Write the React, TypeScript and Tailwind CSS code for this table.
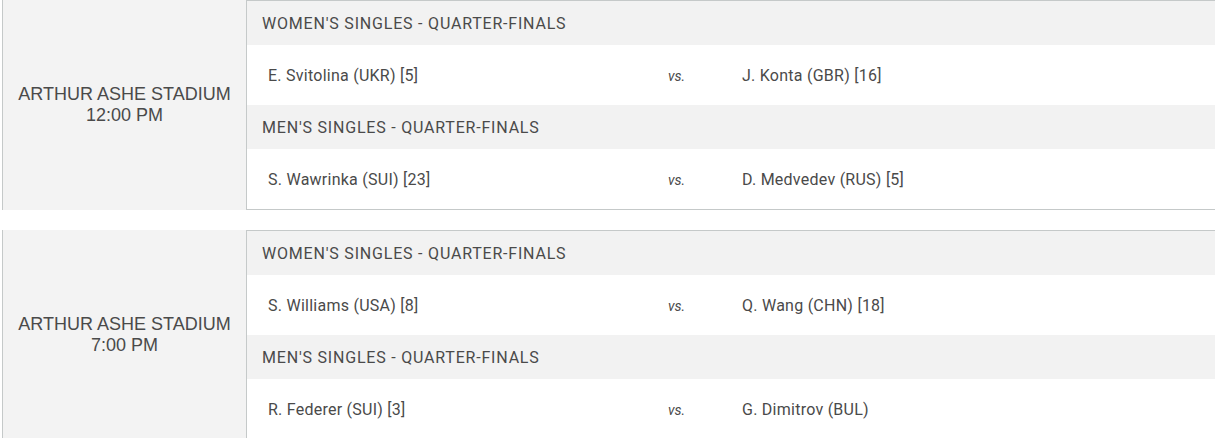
const SESSIONS = [
  {
    time: "12:00 PM",
    matches: [
      { event: "WOMEN'S SINGLES - QUARTER-FINALS", p1: "E. Svitolina (UKR) [5]", p2: "J. Konta (GBR) [16]" },
      { event: "MEN'S SINGLES - QUARTER-FINALS", p1: "S. Wawrinka (SUI) [23]", p2: "D. Medvedev (RUS) [5]" },
    ],
  },
  {
    time: "7:00 PM",
    matches: [
      { event: "WOMEN'S SINGLES - QUARTER-FINALS", p1: "S. Williams (USA) [8]", p2: "Q. Wang (CHN) [18]" },
      { event: "MEN'S SINGLES - QUARTER-FINALS", p1: "R. Federer (SUI) [3]", p2: "G. Dimitrov (BUL)" },
    ],
  },
];

export default function App() {
  return (
    <div className="min-h-screen bg-white pl-[2px] text-[#4a4a4a]">
      <div className="flex flex-col gap-[20px]">
        {SESSIONS.map((s) => (
          <div key={s.time} className="flex">
            <div className="flex w-[244px] shrink-0 flex-col items-center justify-center border-l border-[#c5c9c9] bg-[#f3f3f3] font-['Liberation_Sans',Arial,sans-serif] text-[18px] leading-[21px] text-[#4a4a4a]">
              <div>ARTHUR ASHE STADIUM</div>
              <div>{s.time}</div>
            </div>
            <div className="flex-1 border-y border-l border-[#c5c9c9] font-['Roboto',sans-serif] text-[16px]">
              {s.matches.map((m) => (
                <div key={m.p1}>
                  <div className="flex h-[44px] items-center bg-[#f2f2f2] pt-[2px] pl-[15px] tracking-[0.8px]">{m.event}</div>
                  <div className="flex h-[60px] items-center bg-white pt-[2px] tracking-[0.25px]">
                    <div className="w-[421px] pl-[21px]">{m.p1}</div>
                    <div className="w-[74px] text-[14px] tracking-normal italic">vs.</div>
                    <div>{m.p2}</div>
                  </div>
                </div>
              ))}
            </div>
          </div>
        ))}
      </div>
    </div>
  );
}
